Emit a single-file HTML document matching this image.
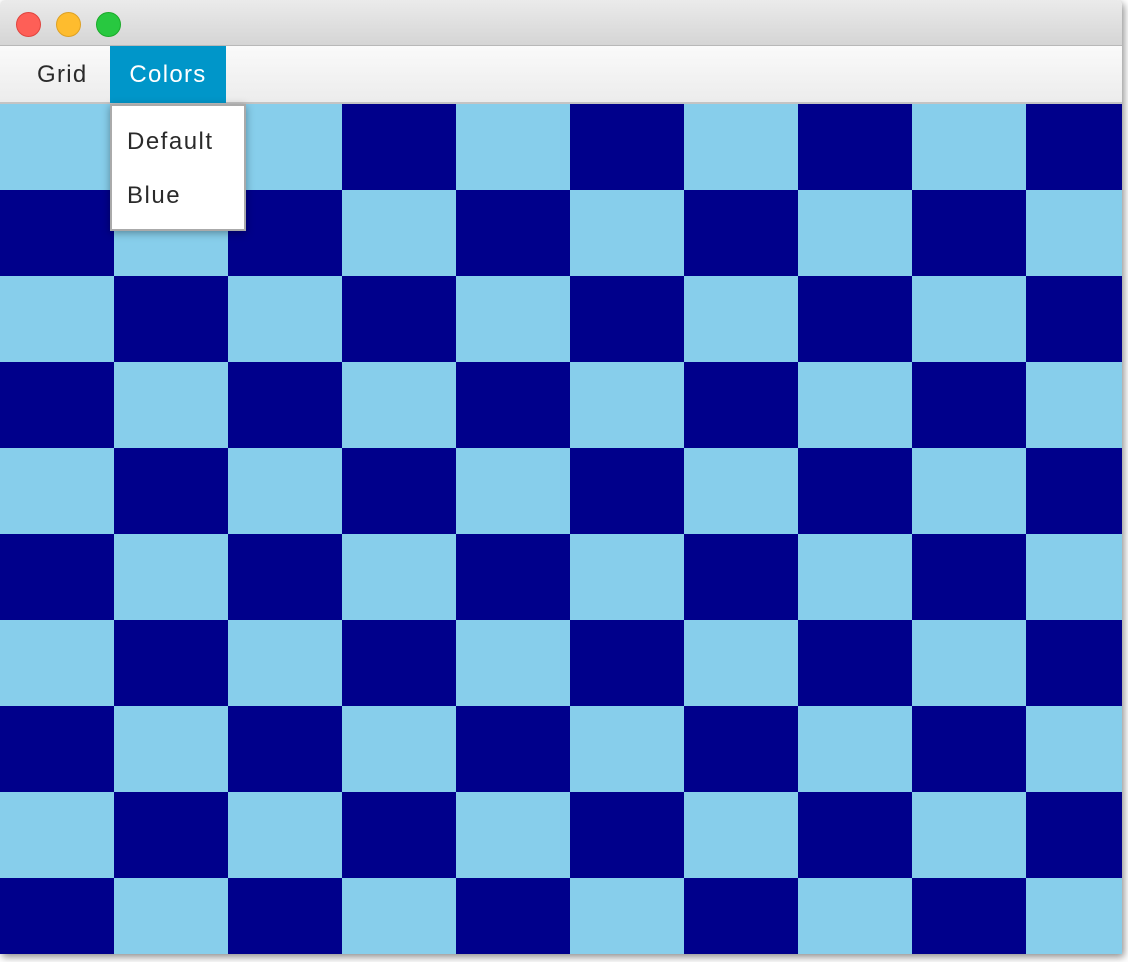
<!DOCTYPE html>
<html><head><style>
body{margin:0;width:1128px;height:962px;background:#fff;position:relative;overflow:hidden;font-family:"Liberation Sans",sans-serif}
#win{position:absolute;left:0;top:0;width:1122px;height:954px;border-radius:5px 5px 0 0;overflow:hidden;box-shadow:2px 3px 8px rgba(0,0,0,0.45)}
#title{position:absolute;left:0;top:0;width:100%;height:45px;background:linear-gradient(#ebebeb,#d5d5d5);border-bottom:1px solid #b8b8b8}
.dot{position:absolute;top:12px;width:23px;height:23px;border-radius:50%}
#menu{position:absolute;left:0;top:46px;width:100%;height:56px;background:linear-gradient(#fafafa,#ececec);border-bottom:2px solid #c4c4c4}
.mi{position:absolute;top:0;height:57px;line-height:58px;font-size:24px;color:#2a2a2a;letter-spacing:1.3px}
#grid{position:absolute;left:0;top:104px;width:1122px;height:850px;background:#87CEEB}
.c{position:absolute;width:114px;height:86px;background:#00008B}
#pop{position:absolute;left:110px;top:104px;width:132px;height:123px;background:#fff;border:2px solid #aaa;box-shadow:0 2px 8px rgba(0,0,0,0.35)}
.pi{position:absolute;left:15px;font-size:24px;color:#2a2a2a;letter-spacing:1.5px}
</style></head><body>
<div id="win">
<div id="title">
<div class="dot" style="left:16px;background:#fe5f57;border:0.5px solid #e0443e"></div>
<div class="dot" style="left:56px;background:#febc2e;border:0.5px solid #dea123"></div>
<div class="dot" style="left:96px;background:#28c840;border:0.5px solid #1aab29"></div>
</div>
<div id="menu">
<div class="mi" style="left:37px">Grid</div>
<div class="mi" style="left:110px;width:116px;background:#0096C9;color:#fff;text-align:center">Colors</div>
</div>
<div id="grid">
<script>
for(let r=0;r<10;r++)for(let c=0;c<10;c++)if((r+c)%2==1)document.write('<div class="c" style="left:'+(c*114)+'px;top:'+(r*86)+'px"></div>');
</script>
</div>
<div id="pop">
<div class="pi" style="top:22px">Default</div>
<div class="pi" style="top:76px">Blue</div>
</div>
</div>
</body></html>
